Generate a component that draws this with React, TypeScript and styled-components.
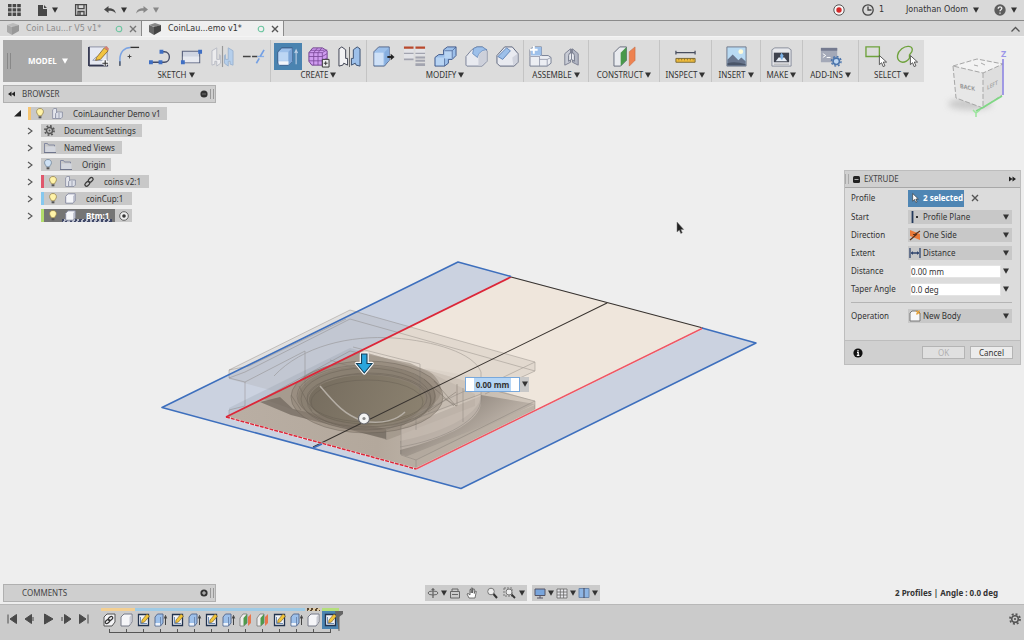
import React from "react";
import styled, { createGlobalStyle } from "styled-components";

const GlobalStyle = createGlobalStyle`
  * { box-sizing: border-box; }
  html, body { margin: 0; padding: 0; }
  body {
    background: #eeeeee;
    color: #333;
    font-family: "Noto Sans", "Open Sans", sans-serif;
    font-size: 8px;
    line-height: 12px;
  }
  button, input, select { font: inherit; color: inherit; margin: 0; padding: 0; border: 0; background: none; border-radius: 0; }
  ul, ol { list-style: none; margin: 0; padding: 0; }
  svg { display: block; flex: none; overflow: visible; }
`;

/* ---------- page frame ---------- */

const Page = styled.div`
  display: flex;
  flex-direction: column;
  min-height: 100vh;
`;

const AppBar = styled.header`
  display: flex;
  align-items: center;
  justify-content: space-between;
  height: 21px;
  padding: 0 7px 0 8px;
  background: #d9d9d9;
  border-bottom: 1px solid #8a8a8a;
`;

const BarSide = styled.div<{ $gap: number }>`
  display: flex;
  align-items: center;
  gap: ${(p) => p.$gap}px;
`;

const BarButton = styled.button`
  display: flex;
  align-items: center;
  gap: 5px;
  height: 16px;
  font-family: "DejaVu Sans", sans-serif;
`;

const TabBar = styled.nav`
  display: flex;
  align-items: stretch;
  height: 16px;
  background: #d6d6d6;
  border-bottom: 1px solid #f4f4f4;
`;

const Tab = styled.div<{ $active?: boolean }>`
  display: flex;
  align-items: center;
  width: 142px;
  padding: 0 4px 0 7px;
  border-right: 1px solid #8a8a8a;
  background: ${(p) => (p.$active ? "#efefef" : "#d9d9d9")};
  color: ${(p) => (p.$active ? "#333" : "#8c8c8c")};
`;

const TabName = styled.button`
  display: flex;
  flex: 1;
  align-items: center;
  gap: 7px;
  white-space: nowrap;
  font-family: "DejaVu Sans", sans-serif;
`;

const TabClose = styled.button`
  display: flex;
  margin-left: 6px;
`;

const CollapseButton = styled.button`
  display: flex;
  align-items: center;
  margin: 0 4px 0 auto;
`;

const Workspace = styled.main`
  position: relative;
  display: flex;
  flex: 1;
  flex-direction: column;
`;

/* ---------- ribbon ---------- */

const RibbonRow = styled.div`
  display: flex;
  align-items: flex-start;
  justify-content: space-between;
  padding: 3px 8px 3px 3px;
  height: 48px;
`;

const Ribbon = styled.div`
  position: relative;
  display: flex;
  height: 42px;
  background: #dcdcdc;
`;

const ModelButton = styled.button`
  display: flex;
  align-items: center;
  width: 79px;
  padding-left: 4px;
  gap: 5px;
  background: #a8a8a8;
  color: #fff;
  font-weight: 700;
`;

const ModelLabel = styled.span`
  margin-left: 12px;
`;

const Group = styled.section<{ $width: number }>`
  display: flex;
  flex-direction: column;
  align-items: center;
  width: ${(p) => p.$width}px;
  padding-top: 3px;
  & + & { border-left: 1px solid #c4c4c4; }
`;

const Tools = styled.div`
  display: flex;
  gap: 3px;
`;

const Tool = styled.button<{ $on?: boolean }>`
  display: flex;
  align-items: center;
  justify-content: center;
  width: 28px;
  height: 27px;
  background: ${(p) => (p.$on ? "#4a83b0" : "transparent")};
`;

const GroupMenu = styled.button`
  display: flex;
  align-items: center;
  gap: 2px;
  height: 10px;
  line-height: 10px;
  white-space: nowrap;
`;

const CubeHolder = styled.div`
  height: 42px;
  width: 72px;
  padding-top: 5px;
`;

/* ---------- browser ---------- */

const Middle = styled.div`
  display: flex;
  flex: 1;
  align-items: flex-start;
  justify-content: space-between;
  padding: 0 3px;
`;

const Browser = styled.aside`
  position: relative;
  width: 213px;
`;

const PanelBar = styled.div`
  display: flex;
  align-items: center;
  width: 213px;
  height: 18px;
  padding: 0 1px 0 4px;
  background: #cfcfcf;
  border: 1px solid #b0b0b0;
`;

const PanelTitle = styled.h2`
  flex: 1;
  margin: 0 0 0 7px;
  font-size: 8px;
  font-weight: 400;
  color: #444;
`;

const IconButton = styled.button`
  display: flex;
  align-items: center;
  justify-content: center;
  min-width: 7px;
  height: 12px;
`;

const Tree = styled.ul`
  display: flex;
  flex-direction: column;
  gap: 4px;
  padding: 4px 0 0 11px;
`;

const TreeItem = styled.li<{ $root?: boolean }>`
  display: flex;
  align-items: center;
  height: 13px;
  margin-left: ${(p) => (p.$root ? 0 : 13)}px;
`;

const Expander = styled.button`
  display: flex;
  width: 14px;
  justify-content: flex-start;
`;

const hatch = "repeating-linear-gradient(115deg, #3f4766 0 2px, #b9bdcb 2px 4px)";

const Chip = styled.span<{ $mark?: string; $on?: boolean; $gap: number; $width: number }>`
  display: flex;
  align-items: center;
  gap: ${(p) => p.$gap}px;
  width: ${(p) => p.$width}px;
  height: 13px;
  padding-left: ${(p) => (p.$mark ? 5 : 3)}px;
  border-left: ${(p) => (p.$mark ? `3px solid ${p.$mark}` : "0")};
  background: ${(p) => (p.$on ? `${hatch} 18px 100% / 50px 3px no-repeat #757575` : "#c8c8c8")};
  color: ${(p) => (p.$on ? "#fff" : "#333")};
  font-weight: ${(p) => (p.$on ? 700 : 400)};
  white-space: nowrap;
`;

const ChipText = styled.span`
  margin-left: 2px;
`;

const ActiveToggle = styled.button`
  display: flex;
  align-items: center;
  justify-content: center;
  width: 17px;
  height: 13px;
  background: #c8c8c8;
`;

/* ---------- extrude dialog ---------- */

const Dialog = styled.form`
  position: relative;
  width: 177px;
  margin-top: 85px;
  background: #dcdcdc;
  border: 1px solid #bdbdbd;
`;

const DialogBar = styled.div`
  display: flex;
  align-items: center;
  height: 17px;
  padding: 0 4px 0 0;
  gap: 4px;
  background: #d0d0d0;
  border-bottom: 1px solid #a8a8a8;
`;

const DialogTitle = styled.h2`
  flex: 1;
  margin: 0;
  font-size: 8px;
  font-weight: 400;
  color: #444;
`;

const Fields = styled.div`
  padding: 0 8px 0 6px;
`;

const Field = styled.div<{ $tall?: boolean }>`
  display: grid;
  grid-template-columns: 57px minmax(0, 1fr);
  align-items: center;
  height: ${(p) => (p.$tall ? 20 : 18)}px;
`;

const Picked = styled.div`
  display: flex;
  align-items: center;
  gap: 7px;
`;

const PickButton = styled.button`
  display: flex;
  align-items: center;
  gap: 4px;
  width: 56px;
  height: 17px;
  padding-left: 4px;
  background: #4f86b4;
  color: #fff;
  font-weight: 700;
  white-space: nowrap;
`;

const Control = styled.div<{ $input?: boolean }>`
  position: relative;
  display: flex;
  align-items: center;
  gap: 2px;
  height: 14px;
  padding-right: 3px;
  padding-left: ${(p) => (p.$input ? 2 : 1)}px;
  background: ${(p) => (p.$input ? "transparent" : "#c8c8c8")};
`;

const Choice = styled.select`
  flex: 1;
  min-width: 0;
  height: 14px;
  appearance: none;
`;

const Value = styled.input`
  flex: 1;
  min-width: 0;
  width: 0;
  height: 13px;
  background: #fff;
  border: 1px solid #e4e4e4;
`;

const Divider = styled.hr`
  margin: 4px 0;
  border: 0;
  border-top: 1px solid #b4b4b4;
`;

const DialogFooter = styled.div`
  display: flex;
  align-items: center;
  justify-content: space-between;
  height: 24px;
  margin-top: 15px;
  padding: 0 7px 0 8px;
  background: #d0d0d0;
  border-top: 1px solid #bdbdbd;
`;

const Buttons = styled.div`
  display: flex;
  gap: 5px;
`;

const DialogButton = styled.button`
  width: 43px;
  height: 13px;
  line-height: 11px;
  background: #ececec;
  border: 1px solid #b4b4b4;
  &:disabled { color: #b0b0b0; background: #e0e0e0; }
`;

/* ---------- model view ---------- */

const Scene = styled.div`
  position: absolute;
  left: calc(50% - 352px);
  top: calc(50% - 101px);
  width: 600px;
  height: 272px;
`;

const DistanceBox = styled.div`
  position: absolute;
  left: 305px;
  top: 157px;
  display: flex;
  align-items: center;
  gap: 2px;
  width: 64px;
  height: 15px;
  padding-right: 1px;
  background: #c8c8c8;
`;

const DistanceInput = styled.input`
  width: 55px;
  height: 15px;
  background: linear-gradient(#b5d5f5, #b5d5f5) 8px 0 / 37px 100% no-repeat #fff;
  border: 1px solid #78a8dc;
  font-weight: 700;
  text-align: center;
`;

/* ---------- bottom rows ---------- */

const BottomRow = styled.div`
  position: relative;
  display: grid;
  grid-template-columns: 1fr auto 1fr;
  align-items: center;
  padding: 0 26px 2px 3px;
`;

const NavGroups = styled.div`
  display: flex;
  gap: 5px;
  margin-left: 23px;
`;

const NavGroup = styled.div`
  display: flex;
  align-items: center;
  height: 16px;
  padding: 0 2px;
  gap: 2px;
  background: #cbcbcb;
`;

const Status = styled.p`
  margin: 0;
  text-align: right;
  font-weight: 700;
`;

const Timeline = styled.footer`
  display: flex;
  align-items: flex-start;
  height: 36px;
  padding: 3px 3px 0 6px;
  background: #cbcbcb;
  border-top: 1px solid #b8b8b8;
`;

const Player = styled.div`
  display: flex;
  gap: 6px;
  margin: 5px 11px 0 0;
`;

const Step = styled.button`
  display: flex;
  width: 12px;
  height: 12px;
  align-items: center;
  justify-content: center;
`;

const Feature = styled.li`
  display: flex;
  flex-direction: column;
  align-items: center;
  width: 17px;
`;

const OwnerBar = styled.span<{ $fill: string; $short?: boolean }>`
  width: ${(p) => (p.$short ? 13 : 17)}px;
  height: 3px;
  background: ${(p) => p.$fill};
`;

const FeatureButton = styled.button<{ $on?: boolean }>`
  display: flex;
  align-items: center;
  justify-content: center;
  width: 17px;
  height: 18px;
  background: ${(p) => (p.$on ? "#4a83b0" : "transparent")};
`;

const Tick = styled.span<{ $end?: "first" | "last" }>`
  width: ${(p) => (p.$end ? 9 : 17)}px;
  align-self: ${(p) => (p.$end === "first" ? "flex-end" : "flex-start")};
  height: 4px;
  border-bottom: 1px solid #555;
  background: linear-gradient(#555, #555) ${(p) => (p.$end === "first" ? "left" : p.$end === "last" ? "right" : "center")} / 1px 100% no-repeat;
`;

const Features = styled.ol`
  display: flex;
  flex: 1;
`;

const TimelineSettings = styled(IconButton)`
  margin-top: 5px;
`;

/* ---------- small glyphs ---------- */

const Caret = ({ size = 6, color = "#333" }: { size?: number; color?: string }) => (
  <svg width={size} height={size} viewBox="0 0 6 6" aria-hidden="true"><path d="M0 .5h6L3 5.8z" fill={color} /></svg>
);

const Cross = ({ color = "#555" }: { color?: string }) => (
  <svg width="8" height="8" viewBox="0 0 8 8"><path d="M1 1l6 6M7 1L1 7" stroke={color} strokeWidth="1.4" /></svg>
);

const Grip = ({ h = 10, color = "#999" }: { h?: number; color?: string }) => (
  <svg width="4" height={h} viewBox={`0 0 4 ${h}`}><path d={`M.5 0v${h}M3.5 0v${h}`} stroke={color} /></svg>
);

const TabCube = ({ dark }: { dark?: boolean }) => (
  <svg width="12" height="12" viewBox="0 0 12 12">
    <path d="M0 2l6-2 6 2-6 2z" fill={dark ? "#888" : "#bbb"} />
    <path d="M0 2l5 2v8L0 9z" fill={dark ? "#666" : "#a8a8a8"} />
    <path d="M5 4l7-2v6l-7 4z" fill={dark ? "#444" : "#989898"} />
  </svg>
);

const Saved = () => (
  <svg width="8" height="8" viewBox="0 0 8 8"><circle cx="4" cy="4" r="2.8" fill="none" stroke="#6cc5a0" strokeWidth="1.1" /></svg>
);

const Bulb = ({ blue }: { blue?: boolean }) => (
  <svg width="8" height="11" viewBox="0 0 8 11">
    <path d="M4 .5C1.800.5.6 2 .6 3.700c0 2 1.500 2.500 1.800 4.100h3.200C5.900 6.200 7.400 5.700 7.400 3.700 7.400 2 6.200.5 4 .5z" fill={blue ? "#cfe2f5" : "#fff3a8"} stroke={blue ? "#6f8499" : "#97844a"} strokeWidth=".8" />
    <path d="M2.600 8.300h2.800v2H2.600z" fill="#555" />
  </svg>
);

const Gear = ({ size = 11 }: { size?: number }) => (
  <svg width={size} height={size} viewBox="0 0 12 12">
    <circle cx="6" cy="6" r="3.300" fill="none" stroke="#555" strokeWidth="1.600" />
    <circle cx="6" cy="6" r="5" fill="none" stroke="#555" strokeWidth="1.800" strokeDasharray="1.960 1.960" />
    <circle cx="6" cy="6" r="1.100" fill="#555" />
  </svg>
);

const Folder = () => (
  <svg width="12" height="10" viewBox="0 0 12 10">
    <path d="M.5 9.500v-9h3l1 1.500h6v1.500" fill="none" stroke="#8288a0" />
    <path d="M1.500 9V3.500h10V9z" fill="#d3d6de" /><path d="M0 9.500h12" stroke="#70768c" />
  </svg>
);

const Component = () => (
  <svg width="11" height="11" viewBox="0 0 11 11">
    <path d="M.6 1.800L2 .5h2.500V5L3.500 10.500H.6z" fill="#e4e6ec" stroke="#858a9e" strokeWidth=".8" />
    <path d="M3.600 5.500L5 4h5.400v5L9 10.500H3.600z" fill="#dcdfe8" stroke="#858a9e" strokeWidth=".8" />
    <path d="M7 5v5" stroke="#858a9e" strokeWidth=".7" />
  </svg>
);

const Body = ({ size = 11 }: { size?: number }) => (
  <svg width={size} height={size} viewBox="0 0 11 11">
    <path d="M.7 3.300L3 .8h7.200v7L8 10.200H.7z" fill="#f4f5f9" stroke="#80859c" strokeWidth=".9" strokeLinejoin="round" />
    <path d="M8.200 3.300v6.500l1.900-2V1z" fill="#b9bccb" />
  </svg>
);

const Link = () => (
  <svg width="10" height="10" viewBox="0 0 10 10" fill="none" stroke="#3c3c3c" strokeWidth="1.300">
    <rect x="4" y="1.200" width="5.400" height="3.400" rx="1.700" transform="rotate(-45 6.700 2.900)" />
    <rect x=".6" y="5.200" width="5.400" height="3.400" rx="1.700" transform="rotate(-45 3.300 6.900)" />
  </svg>
);

const Arrow = ({ size = 11 }: { size?: number }) => (
  <svg width={size * 0.7} height={size} viewBox="0 0 8 12"><path d="M.6.600v9.200l2.200-2 1.500 3.500 1.600-.7L4.400 7.200h3z" fill="#fff" stroke="#333" strokeWidth=".8" /></svg>
);

const Chevron = () => (
  <svg width="6" height="8" viewBox="0 0 6 8"><path d="M1 1l4 3-4 3" fill="none" stroke="#555" strokeWidth="1.100" /></svg>
);

const Dot = ({ plus }: { plus?: boolean }) => (
  <svg width="8" height="8" viewBox="0 0 8 8"><circle cx="4" cy="4" r="3.600" fill="#333" /><path d={plus ? "M2 4h4M4 2v4" : "M2 4h4"} stroke={plus ? "#ddd" : "#777"} strokeWidth=".9" /></svg>
);

const Rewind = ({ flip }: { flip?: boolean }) => (
  <svg width="7" height="6" viewBox="0 0 7 6"><path d={flip ? "M0 .500l3.500 2.500L0 5.500zM3.500.500L7 3 3.500 5.500z" : "M7 .500L3.500 3 7 5.500zM3.500.500L0 3l3.500 2.500z"} fill="#222" /></svg>
);

/* ---------- ribbon icons, on a 24 x 24 grid ---------- */

const Glyph = ({ children, size = 23 }: { children: React.ReactNode; size?: number }) => (
  <svg width={size} height={size} viewBox="0 0 24 24" fill="none" aria-hidden="true">{children}</svg>
);

const blueSolid = "#9dc0ea";

const sketchTools: [string, React.ReactNode][] = [
  ["Create sketch", <Glyph key="a">
    <path d="M2 2h19v19H2z" fill="#e6e9f2" stroke="#8b90a4" strokeWidth="1" /><path d="M2 21.500h20M2 2v20" stroke="#33374f" strokeWidth="1.800" />
    <path d="M6 16h10M6 16l4-4" stroke="#9aa2b8" /><path d="M10 13L18 3l4 3-8 9-5 1z" fill="#f2c440" stroke="#7e5e25" strokeWidth=".8" /><path d="M18 3l4 3 1-2-3-3z" fill="#d9806f" />
    <path d="M19 15v7M15.500 18.500h7" stroke="#fff" strokeWidth="3" /><path d="M19 16v6M16 19h6" stroke="#333" strokeWidth="1.200" /></Glyph>],
  ["Fillet", <Glyph key="b"><path d="M2 21v-6C2 7 7 2.500 13 2.500" stroke="#7ba3e2" strokeWidth="1.600" /><path d="M13 2.500h9" stroke="#333" strokeWidth="1.400" /><path d="M2 17v5" stroke="#444" strokeWidth="1.200" /><path d="M10 12h4M12 10v4" stroke="#444" /></Glyph>],
  ["Line", <Glyph key="c"><path d="M2 18h10M12 18h4c7 0 7-11 0-11h-2" stroke="#444c68" strokeWidth="1.400" /><path d="M0 16h4v4H0zM10 16h4v4h-4zM11 5h4v4h-4z" fill="#3f6fc4" /></Glyph>],
  ["Rectangle", <Glyph key="d"><path d="M2.500 6.500h18v12h-18z" fill="#d0d5e2" stroke="#5c6480" strokeWidth="1.200" /><path d="M3 12h17v6H3z" fill="#e7e9f0" /><path d="M1 16h4v4H1zM19 5h4v4h-4z" fill="#3f6fc4" /></Glyph>],
  ["Mirror sketch", <Glyph key="e"><path d="M1 6l5-3v12h3v-5l1 1v8l-4 3v-5H4v3l-3 1z" fill="#ececee" stroke="#b8bbc4" /><path d="M23 6l-5-3v12h-3v-5l-1 1v8l4 3v-5h2v3l3 1z" fill="#b5cfec" stroke="#9db4d0" /><path d="M12 1v22" stroke="#999" strokeWidth="1.200" /></Glyph>],
  ["Trim", <Glyph key="f"><path d="M1 12h15" stroke="#444" strokeWidth="1.500" strokeDasharray="8 1.500" /><path d="M16 12h7" stroke="#8ab0e8" strokeWidth="1.400" /><path d="M15 19l3-5M19 12l4-7" stroke="#74a0e4" strokeWidth="1.700" /></Glyph>],
];

const createTools: [string, React.ReactNode][] = [
  ["Extrude", <Glyph key="a">
    <path d="M2 7l4-4h11v14l-4 4H4l-2-2z" fill={blueSolid} stroke="#38557f" strokeWidth="1" strokeLinejoin="round" />
    <path d="M2.500 7.500h10.500v9H2.500z" fill="#bcd6f4" /><path d="M13 7l4-4v14l-4 4z" fill="#7ba4d6" /><path d="M2.500 17H13v3.500H3z" fill="#f3f5fa" />
    <path d="M21 20V6M19.500 8.500L21 5l1.500 3.500" stroke="#bdd0e6" strokeWidth="1.100" /></Glyph>],
  ["Create form", <Glyph key="b"><path d="M2 8l4-5h10l5 3v10l-4 5H5l-3-4z" fill="#cf9cf0" stroke="#71418e" strokeLinejoin="round" />
    <path d="M2 8h14l5-3M2 12h14l5-3M2 16.500h14l5-3M7 21V8l4-5M11.500 21V8l4-5M16 21V8M4 5.500h14" stroke="#7d4a9c" strokeWidth=".9" />
    <path d="M16 15h7v8h-7z" fill="#eee" stroke="#333" /><path d="M19.500 17v4M17.500 19h4" stroke="#333" /></Glyph>],
  ["Mirror", <Glyph key="c"><path d="M1 4l3-2 4 3v9h2v7l-4-2-1 2-4 1z" fill="#f2f2f4" stroke="#3b3f4e" /><path d="M23 4l-3-2-4 3v9h-2v7l4-2 1 2 4 1z" fill={blueSolid} stroke="#3b4f70" /><path d="M12 2v21" stroke="#666" /></Glyph>],
];

const modifyTools: [string, React.ReactNode][] = [
  ["Press pull", <Glyph key="a"><path d="M2 7l5-5h11v14l-5 6H2z" fill={blueSolid} stroke="#56668a" strokeLinejoin="round" /><path d="M2.500 8H12v13H2.500z" fill="#cfe1f7" /><path d="M13 7.500l5-5V16l-5 5z" fill="#86aedf" /><path d="M16 12.500h4" stroke="#222" strokeWidth="2" /><path d="M19.500 9l4 3.500-4 3.500z" fill="#222" /></Glyph>],
  ["Physical material", <Glyph key="b"><path d="M1 2h10v14H1zM13 2h10v9H13z" fill="#e2e3e7" /><path d="M1 1.500h10V4H1zM13 1.500h10V4H13z" fill="#b9492c" /><path d="M1 8h10v1.500H1zM1 14h10v2H1zM13 8h10v1.500H13zM13 12h10v2H13zM13 15.500h10v2H13zM13 19h10v3H13z" fill="#a2a4af" /></Glyph>],
  ["Combine", <Glyph key="c"><path d="M1 13l4-3h5V5l4-3h9v9l-4 4h-4v4l-4 3H1z" fill={blueSolid} stroke="#40598a" /><path d="M2 13h9v8H2zM11 6h8v8h-8z" fill="#bfd8f5" opacity=".8" /><path d="M11 22v-8M11 6h8v8M19 6l4-4" stroke="#40598a" strokeWidth=".7" /></Glyph>],
  ["Fillet edge", <Glyph key="d"><path d="M1 21V12l6-7 5-3h6l5 4v11l-5 5H2z" fill="#e8eaf0" stroke="#777f96" strokeLinejoin="round" /><path d="M9 3.500L13 2h5l5 3c-6 0-9 4-10 8L8 9z" fill={blueSolid} stroke="#5f83b4" strokeWidth=".8" /><path d="M14 21.500v-8c0-4 3-7.500 8.500-7.500v11l-5 4.500z" fill="#cdd0da" /></Glyph>],
  ["Chamfer", <Glyph key="e"><path d="M1 11l8-9h8l6 7v9l-4 4H4l-3-3z" fill="#e8eaf0" stroke="#5d657c" strokeLinejoin="round" /><path d="M2 12l9-9 4 3-8 9z" fill={blueSolid} stroke="#4c74ad" strokeWidth=".8" /><path d="M17 13l5.500-4v9L18 21.500z" fill="#d0d3dd" /></Glyph>],
];

const assembleTools: [string, React.ReactNode][] = [
  ["New component", <Glyph key="a"><path d="M1 12V5l3-3h9v9h7l3 2v6l-4 3H1z" fill="#eceef3" stroke="#777f94" /><path d="M2 5l3-3h8v9H2z" fill={blueSolid} /><path d="M1.500 12h9.500v10M11 12l2-2M11 15h8v7M19 15l4-2" stroke="#8a90a4" strokeWidth=".8" /><path d="M5 1v8M1 5h8" stroke="#fff" strokeWidth="2" /></Glyph>],
  ["Joint", <Glyph key="b"><path d="M5 21V9l6-5v14z" fill="#c9ccd6" stroke="#7c8192" /><path d="M19 21V9l-6-5v14z" fill="#b2b6c3" stroke="#7c8192" /><path d="M9 17v-6a3 3 0 016 0v6l-3-2z" fill="#e9ebf0" stroke="#6f7486" /><path d="M12 4v11" stroke="#7c8192" /></Glyph>],
];

const constructTools: [string, React.ReactNode][] = [
  ["Offset plane", <Glyph key="a"><path d="M1 8l6-6h7v14l-6 6H1z" fill="#e9ebef" stroke="#666d7c" /><path d="M8 8l6-6v14l-6 6z" fill="#48984a" /><path d="M17 7l6-5v14l-6 6z" fill="#ee8250" stroke="#c46b42" strokeWidth=".6" /></Glyph>],
];

const inspectTools: [string, React.ReactNode][] = [
  ["Measure", <Glyph key="a"><path d="M2 8h20M2 6v4M22 6v4" stroke="#474d5e" strokeWidth="1.300" /><path d="M2 14h20v4H2z" fill="#f1bd3c" stroke="#7b6833" /><path d="M5 14v2M8 14v2M11 14v2M14 14v2M17 14v2M20 14v2" stroke="#7b6833" strokeWidth=".8" /></Glyph>],
];

const insertTools: [string, React.ReactNode][] = [
  ["Insert image", <Glyph key="a"><path d="M2 2h20v20H2z" fill="#b9daf2" stroke="#70798a" /><circle cx="16.500" cy="7" r="2.500" fill="#fffbd9" /><path d="M2.500 21.500v-6L8 10l6 6 3-3 4.500 4v4.500z" fill="#68758c" /><path d="M2.500 19c6-2 12-1 19 1v1.500h-19z" fill="#4a5568" /></Glyph>],
];

const makeTools: [string, React.ReactNode][] = [
  ["3D print", <Glyph key="a"><path d="M2 5l3-2h14l3 2v17H2z" fill="#e7e8ec" stroke="#888d9b" /><path d="M4 8h16v10H4z" fill="#3f434f" /><path d="M6 17l3-4h6l3 4z" fill="#e8eef6" /><path d="M12 8l-1.500 3 1 4h1.500l1-4z" fill="#7cb2e8" /><path d="M4 20h16" stroke="#aaa" /></Glyph>],
];

const addinTools: [string, React.ReactNode][] = [
  ["Scripts", <Glyph key="a"><path d="M2 3h17v15H2z" fill="#a4a9b8" /><path d="M2 3h17v3H2z" fill="#757b90" /><path d="M4 9l3 2-3 2M8 13h4" stroke="#fff" /><circle cx="18" cy="17" r="3.300" fill="#c0d8f2" stroke="#4c75ac" strokeWidth="1.600" /><circle cx="18" cy="17" r="5" stroke="#4c75ac" strokeWidth="1.500" strokeDasharray="2 1.900" /></Glyph>],
];

const PointerShape = () => <path d="M15 11v9.500l2.300-2 1.600 4 1.900-.8-1.700-3.900h3.400z" fill="#fff" stroke="#444" strokeWidth=".9" />;

const selectTools: [string, React.ReactNode][] = [
  ["Window selection", <Glyph key="a"><path d="M1 2h14v10H1z" stroke="#6ea23c" strokeWidth="1.400" /><PointerShape /></Glyph>],
  ["Freeform selection", <Glyph key="b"><path d="M4 17C0 14 1 8 6 4s11-3 11 1-4 4-3 7-6 8-10 5z" stroke="#6ea23c" strokeWidth="1.400" /><PointerShape /></Glyph>],
];

const groups: { name: string; width: number; tools: [string, React.ReactNode][] }[] = [
  { name: "SKETCH", width: 188, tools: sketchTools },
  { name: "CREATE", width: 96, tools: createTools },
  { name: "MODIFY", width: 157, tools: modifyTools },
  { name: "ASSEMBLE", width: 65, tools: assembleTools },
  { name: "CONSTRUCT", width: 71, tools: constructTools },
  { name: "INSPECT", width: 52, tools: inspectTools },
  { name: "INSERT", width: 49, tools: insertTools },
  { name: "MAKE", width: 42, tools: makeTools },
  { name: "ADD-INS", width: 56, tools: addinTools },
  { name: "SELECT", width: 66, tools: selectTools },
];

const ViewCube = () => (
  <svg width="72" height="76" viewBox="944 46 72 76" role="img" aria-label="View cube">
    <defs><filter id="soft" x="-30%" y="-50%" width="160%" height="200%"><feGaussianBlur stdDeviation="3" /></filter></defs>
    <ellipse cx="970" cy="105" rx="22" ry="6" fill="#bbb" opacity=".7" filter="url(#soft)" />
    <path d="M953 67l24-7 26 5-20 9z" fill="#f3f3f3" /><path d="M953 67l30 7v35l-27-10z" fill="#e7e7e7" /><path d="M983 74l20-9-1 31-19 13z" fill="#dedede" />
    <path d="M953 67l24-7 26 5-20 9zM953 67l3 32 27 10V74M983 109l19-13" fill="none" stroke="#a6a6a6" strokeWidth="1" strokeDasharray="5 2" />
    <path d="M974 66l4 1M981 64l4 2" stroke="#aaa" />
    <text x="0" y="0" transform="matrix(.95 .2 .05 1 960 89)" fontSize="6" fontWeight="700" fill="#999">BACK</text>
    <text x="0" y="0" transform="matrix(.8 -.42 0 1 987 91)" fontSize="6" fontWeight="700" fill="#aaa">LEFT</text>
    <path d="M1003 60v36" stroke="#8d85e2" strokeWidth="1.600" /><path d="M1002 97l-20 12-6 3" stroke="#7fd884" strokeWidth="1.800" fill="none" />
    <path d="M973 111l3 3 4-3M976 114v4" stroke="#9ae59c" fill="none" strokeWidth="1.500" />
    <text x="1001" y="58" fontSize="9" fontWeight="700" fill="#9b96e8">Z</text>
  </svg>
);

/* ---------- model drawing ---------- */

const Model = () => (
  <svg width="600" height="272" viewBox="160 220 600 272" fill="none" role="img" aria-label="Sketch plane with coin launcher body">
    <defs>
      <linearGradient id="floor" x1="240" y1="400" x2="520" y2="420" gradientUnits="userSpaceOnUse">
        <stop offset="0" stopColor="#b9aea3" /><stop offset=".5" stopColor="#b3a89c" /><stop offset="1" stopColor="#cfc5ba" />
      </linearGradient>
      <linearGradient id="bowl" x1="310" y1="375" x2="425" y2="420" gradientUnits="userSpaceOnUse">
        <stop offset="0" stopColor="#756c5e" /><stop offset="1" stopColor="#8c8270" />
      </linearGradient>
      <linearGradient id="cove" x1="450" y1="405" x2="475" y2="440" gradientUnits="userSpaceOnUse">
        <stop offset="0" stopColor="#8f867d" /><stop offset="1" stopColor="#b8aea4" />
      </linearGradient>
      <clipPath id="cream"><path d="M226 417L511 277l192 51-287 141z" /></clipPath>
    </defs>
    <path d="M162 407.500L458 262l298 81-295 145.500z" fill="#cbd2e0" />
    <path d="M226 417L511 277l192 51-287 141z" fill="#efe6dc" />
    <path d="M229 370l121-60 185 52v9l-119 58-187-50z" fill="#857a70" opacity=".12" />
    <path d="M229 408l121-60 185 53v8l-119 60-187-52z" fill="#8990a0" opacity=".22" />
    <g clipPath="url(#cream)">
      <path d="M229 416l121-68 185 53v8l-119 60-190-52z" fill="url(#floor)" />
      <path d="M258 397l92-46 60 12 65 31v12l-88 34-60-18z" fill="#9d9286" opacity=".65" />
      <path d="M260 402l20-5 13 12 93 20v10l-95-24z" fill="#71685f" opacity=".75" />
      <path d="M481 395l54 9-119 56-16-6v-13c36-7 80-24 81-46z" fill="url(#cove)" />
      <path d="M535 405v5l-119 59-16-10 30-12z" fill="#b6aca1" opacity=".8" />
      <path d="M401 426l80-32v8c0 18-30 35-81 48z" fill="#c4bab0" opacity=".75" />
      <path d="M425 368l56 10v18l-80 32 20-18c24-8 28-26 4-42z" fill="#d9cfc4" opacity=".6" />
    </g>
    <ellipse cx="367" cy="397" rx="76" ry="36" fill="#8d8274" opacity=".5" />
    <ellipse cx="367" cy="397" rx="69" ry="31" fill="#7c7264" opacity=".5" />
    <ellipse cx="367" cy="400" rx="58" ry="25" fill="url(#bowl)" />
    <g stroke="#5f574d" strokeWidth=".6" opacity=".6">
      <ellipse cx="367" cy="397" rx="76" ry="36" /><ellipse cx="366" cy="396" rx="69" ry="31" />
      <ellipse cx="366" cy="399" rx="65" ry="31" /><ellipse cx="369" cy="401" rx="62" ry="28" />
      <ellipse cx="367" cy="398" rx="60" ry="24" /><ellipse cx="367" cy="402" rx="56" ry="22" />
      <path d="M291 395l10 15M299 386l13 25M424 379l30 27M434 381l22 25M428 412l28-20M443 398l14 8v-22" />
    </g>
    <g stroke="#77716b" strokeWidth=".7" opacity=".5">
      <path d="M229 370l121-60 185 52v9l-50 23M229 370v8l16 4v24l-16 4v8M229 378l16-6 105-53 185 52M245 382l60-31v35M535 362l-50 24M229 370l20-4 97-47" />
      <path d="M274 376c28-30 76-41 120-38 40 3 80 15 87 34v27c0 20-34 40-81 48" />
      <path d="M260 400l90-49 14 3M330 360l25 8M386 440v-10M386 430l70-35 29-13M353 347l67 17v30M401 424v31l15 5 119-59-62-16M416 460v9M401 424l80-30M416 418v12M463 388v34M535 401v8" />
    </g>
    <path d="M320 386c16 19 25 29 43 35 20 4 35-2 42-9" stroke="#b5aea5" strokeWidth="1.500" />
    <path d="M511 277l192 51M607 303L313 447" stroke="#38332f" strokeWidth="1.100" />
    <path d="M226 417l190 52 287-141" stroke="#fff" strokeWidth="2" opacity=".6" />
    <path d="M511 277L226 417" stroke="#dc2638" strokeWidth="1.600" />
    <path d="M226 417l190 52" stroke="#dc2638" strokeWidth="1.500" strokeDasharray="4 1" />
    <path d="M416 469l287-141" stroke="#ee5764" strokeWidth="1.500" />
    <path d="M511 276.500L458 262 162 407.500l299 81L756 343l-54-15M313 448l9-4" stroke="#3d6fbd" strokeWidth="1.600" strokeLinejoin="round" />
    <path d="M361.500 354h5.500v9.500h5l-7.700 9.500-7.800-9.500h5z" fill="#2aa5dc" stroke="#fff" strokeWidth="3.500" strokeLinejoin="round" />
    <path d="M361.500 354h5.500v9.500h5l-7.700 9.500-7.800-9.500h5z" fill="#2aa5dc" stroke="#173f58" strokeWidth="1.100" />
    <circle cx="364" cy="418.500" r="5.500" fill="#f4f4f4" stroke="#68686c" strokeWidth="1.200" /><circle cx="364" cy="418.500" r="1.600" fill="#888" />
    <path d="M677 222v10l2.300-2 1.500 3.500 1.500-.7-1.500-3.300h2.900z" fill="#222" stroke="#777" strokeWidth=".5" />
  </svg>
);

/* ---------- timeline icons ---------- */

const featureIcons: Record<string, React.ReactNode> = {
  link: <svg width="13" height="14" viewBox="0 0 13 14"><path d="M1 4l3-3h8v8l-3 4H1z" fill="#f3f3f5" stroke="#555" /><g fill="none" stroke="#333" strokeWidth="1.200"><rect x="5" y="4" width="5" height="3" rx="1.500" transform="rotate(-40 7.500 5.500)" /><rect x="2" y="7" width="5" height="3" rx="1.500" transform="rotate(-40 4.500 8.500)" /></g></svg>,
  body: <svg width="13" height="14" viewBox="0 0 13 14"><path d="M1 4l3-3h8v8l-3 4H1z" fill="#f5f5f8" stroke="#777a88" strokeLinejoin="round" /><path d="M9.500 4v8l2-3V1.500z" fill="#c9cbd4" /></svg>,
  sketch: <svg width="13" height="14" viewBox="0 0 13 14"><path d="M1.500 1.500h10v11h-10z" fill="#f2f4f8" stroke="#22334e" strokeWidth="1.300" /><path d="M3.500 4v6.500H10" fill="none" stroke="#6f8fb8" /><path d="M5 7l5-6 2.500 2L7.500 9l-3 1z" fill="#f2c53a" stroke="#6d5526" strokeWidth=".6" /></svg>,
  extrude: <svg width="13" height="14" viewBox="0 0 13 14"><path d="M1 4l2.500-3H9v9l-2.500 3H1z" fill="#9dc0ea" stroke="#50648a" strokeWidth=".9" /><path d="M1.500 10h5v2.500h-5z" fill="#eef3fa" /><path d="M6.500 4v9" stroke="#50648a" strokeWidth=".6" /><path d="M11.500 12V4M10.300 5.500l1.200-3 1.200 3" fill="none" stroke="#333" strokeWidth=".9" /></svg>,
  plane: <svg width="13" height="14" viewBox="0 0 13 14"><path d="M1 5l3-4h4v9l-3 3H1z" fill="#eee" stroke="#777" strokeWidth=".8" /><path d="M4.500 5L8 1v9l-3.500 3z" fill="#4e9a4c" /><path d="M9 4l3-3v9l-3 3z" fill="#e8774c" /></svg>,
};

const features: { kind: string; label: string; bar: string; short?: boolean; on?: boolean }[] = [
  { kind: "link", label: "coins", bar: "#f3cf92" },
  { kind: "body", label: "coinCup", bar: "#f3cf92" },
  ...["sketch", "extrude", "sketch", "extrude", "sketch", "extrude", "plane", "plane", "sketch", "extrude"].map((kind) => ({ kind, label: kind, bar: "#9fcbe6" })),
  { kind: "body", label: "Btm", bar: "repeating-linear-gradient(115deg, #5a4630 0 2px, #dcc9a4 2px 4px)", short: true },
  { kind: "sketch", label: "Sketch", bar: "#b5e07c", on: true },
];

const playerPaths: [string, string][] = [
  ["To start", "M2 1.500v9M10.500 1.500v9L4 6z"],
  ["Step back", "M7.500 1.500v9L1 6zM9 4v4"],
  ["Play", "M2.500 1v10L11 6z"],
  ["Step forward", "M4.500 1.500v9L11 6zM2 4v4"],
  ["To end", "M10 1.500v9M1.500 1.500v9L8 6z"],
];

type Node = { text: string; width: number; gap: number; mark?: string; icons: React.ReactNode };

const nodes: Node[] = [
  { text: "Document Settings", width: 101, gap: 7, icons: <Gear /> },
  { text: "Named Views", width: 81, gap: 6, icons: <Folder /> },
  { text: "Origin", width: 70, gap: 8, icons: <><Bulb blue /><Folder /></> },
  { text: "coins v2:1", width: 108, gap: 8, mark: "#e0576b", icons: <><Bulb /><Component /><Link /></> },
  { text: "coinCup:1", width: 91, gap: 8, mark: "#85c8ee", icons: <><Bulb /><Body /></> },
];

const choices = [
  { id: "start", label: "Start", value: "Profile Plane", icon: <svg width="12" height="12" viewBox="0 0 12 12"><path d="M3.500 0v12" stroke="#23395c" strokeWidth="1.800" /><path d="M7 6h2" stroke="#333" strokeWidth="1.800" /></svg> },
  { id: "direction", label: "Direction", value: "One Side", icon: <svg width="12" height="12" viewBox="0 0 12 12"><path d="M1 1l10 4v6L1 7z" fill="#e87a3a" /><path d="M1 11l7-6M8 5l-4 .5M5 6l6-4" stroke="#5a321c" strokeWidth="1.200" /></svg> },
  { id: "extent", label: "Extent", value: "Distance", icon: <svg width="12" height="12" viewBox="0 0 12 12"><path d="M1 1v10M11 1v10M2 6h8" stroke="#31466e" strokeWidth="1.300" fill="none" /><path d="M2 6l2-2v4zM10 6L8 4v4z" fill="#31466e" /></svg> },
];

const ChoiceField = ({ id, label, value, icon }: { id: string; label: string; value: string; icon: React.ReactNode }) => (
  <Field>
    <label htmlFor={id}>{label}</label>
    <Control>{icon}<Choice id={id}><option>{value}</option></Choice><Caret size={6} /></Control>
  </Field>
);

const ValueField = ({ id, label, value }: { id: string; label: string; value: string }) => (
  <Field>
    <label htmlFor={id}>{label}</label>
    <Control $input><Value id={id} defaultValue={value} /><Caret size={6} /></Control>
  </Field>
);

const navA = [
  <svg key="o" width="12" height="12" viewBox="0 0 12 12" fill="none" stroke="#666"><path d="M6 1v10" strokeWidth="1.300" /><ellipse cx="6" cy="6" rx="5" ry="2" /><path d="M4.500 2.500h3" /></svg>,
  <Caret key="c" />,
  <svg key="l" width="12" height="12" viewBox="0 0 12 12" fill="none" stroke="#666"><path d="M1.500 4.500h9v6.500h-9zM3 7.500h6M3 4V2h6v2" /></svg>,
  <svg key="h" width="18" height="12" viewBox="-3 0 18 12"><path d="M3 11L1 7l1-.6L4 8V2.500h1.200V6 1h1.300v5l.6-4h1.200v4.500l1-2.500 1 .4L9 11z" fill="#fff" stroke="#555" strokeWidth=".8" /></svg>,
  <svg key="z" width="18" height="12" viewBox="-3 0 18 12"><circle cx="5" cy="4.500" r="3.300" fill="#eee" stroke="#777" /><path d="M7.500 7l3.500 4" stroke="#333" strokeWidth="2" /></svg>,
  <svg key="w" width="14" height="12" viewBox="0 0 14 12"><path d="M1 1h8v8H1z" fill="none" stroke="#777" strokeDasharray="2 1" /><circle cx="6" cy="5" r="3" fill="#eee" stroke="#777" /><path d="M8.500 7.500L12 11" stroke="#333" strokeWidth="1.800" /></svg>,
  <Caret key="d" />,
];

const navB = [
  <svg key="m" width="12" height="12" viewBox="0 0 12 12"><path d="M1 2h10v6.500H1z" fill="#79a5dc" stroke="#556" /><path d="M3 11h6M6 9v2" stroke="#556" /></svg>,
  <Caret key="a" />,
  <svg key="g" width="12" height="12" viewBox="0 0 12 12"><path d="M1 2h10v9H1zM1 5h10M1 8h10M4.300 2v9M7.600 2v9" fill="#e8e8ec" stroke="#666" strokeWidth=".8" /></svg>,
  <Caret key="b" />,
  <svg key="v" width="12" height="12" viewBox="0 0 12 12"><path d="M1 1.500h10v9H1z" fill="#8db5e4" stroke="#6b86ab" /><path d="M6 1v10" stroke="#445" /></svg>,
  <Caret key="c" />,
];

export default function App() {
  return (
    <Page>
      <GlobalStyle />
      <AppBar>
        <BarSide $gap={17}>
          <BarButton aria-label="Data panel"><svg width="13" height="12" viewBox="0 0 13 12"><path d="M0 0h3.600v3.300H0zM4.600 0h3.600v3.300H4.600zM9.200 0h3.600v3.300H9.200zM0 4.300h3.600v3.300H0zM4.600 4.300h3.600v3.300H4.600zM9.200 4.300h3.600v3.300H9.200zM0 8.600h3.600v3.300H0zM4.600 8.600h3.600v3.300H4.600zM9.200 8.600h3.600v3.300H9.200z" fill="#484848" /></svg></BarButton>
          <BarButton aria-label="File"><svg width="9" height="11" viewBox="0 0 9 11"><path d="M0 0h5v4h4v7H0zM6 0l3 3H6z" fill="#484848" /></svg><Caret /></BarButton>
          <BarButton aria-label="Save"><svg width="12" height="12" viewBox="0 0 12 12"><path d="M.6.600h10.800v10.800H.6zM3 .6v4h6v-4M3 11.400V7.500h6v3.900" fill="none" stroke="#484848" strokeWidth="1.300" /><path d="M5 8v3" stroke="#484848" strokeWidth="1.400" /></svg></BarButton>
          <BarSide $gap={9}>
            <BarButton aria-label="Undo"><svg width="12" height="8" viewBox="0 0 12 8"><path d="M0 3.500L4.500 0v2.200c4.500 0 7 1.800 7.200 5.300C10 5.300 8 4.800 4.500 4.800V7z" fill="#484848" /></svg><Caret /></BarButton>
            <BarButton aria-label="Redo"><svg width="12" height="8" viewBox="0 0 12 8"><path d="M12 3.500L7.500 0v2.200C3 2.200.5 4 .3 7.500 2 5.300 4 4.800 7.500 4.800V7z" fill="#888" /></svg><Caret color="#888" /></BarButton>
          </BarSide>
        </BarSide>
        <BarSide $gap={22}>
          <BarSide $gap={17}>
            <BarButton aria-label="Record"><svg width="12" height="12" viewBox="0 0 12 12"><circle cx="6" cy="6" r="5.200" fill="#f6f6f6" stroke="#555" /><circle cx="6" cy="6" r="2.700" fill="#d42a2a" /></svg></BarButton>
            <BarButton aria-label="Jobs 1"><svg width="12" height="12" viewBox="0 0 12 12" fill="none" stroke="#444" strokeWidth="1.300"><circle cx="6" cy="6" r="5.200" /><path d="M6 2.500V6h3.500" /></svg><span>1</span></BarButton>
          </BarSide>
          <BarSide $gap={15}>
            <BarButton>Jonathan Odom<Caret /></BarButton>
            <BarButton aria-label="Help"><svg width="12" height="12" viewBox="0 0 12 12"><circle cx="6" cy="6" r="5.700" fill="#5c5c5c" /><path d="M4.200 4.700c0-2.600 3.800-2.300 3.600-.2C7.700 5.700 6 5.700 6 7.200M6 8.400v1.300" fill="none" stroke="#eee" strokeWidth="1.300" /></svg><Caret /></BarButton>
          </BarSide>
        </BarSide>
      </AppBar>
      <TabBar>
        <Tab><TabName><TabCube />Coin Lau...r V5 v1*</TabName><Saved /><TabClose aria-label="Close Coin Launcher V5"><Cross color="#777" /></TabClose></Tab>
        <Tab $active><TabName><TabCube dark />CoinLau...emo v1*</TabName><Saved /><TabClose aria-label="Close CoinLauncher Demo"><Cross /></TabClose></Tab>
        <CollapseButton aria-label="Collapse"><svg width="9" height="6" viewBox="0 0 9 6"><path d="M.5 5.500l4-4 4 4" fill="none" stroke="#555" strokeWidth="1.300" /></svg></CollapseButton>
      </TabBar>

      <Workspace>
        <Scene>
          <Model />
          <DistanceBox><DistanceInput aria-label="Extrude distance" defaultValue="0.00 mm" /><Caret /></DistanceBox>
        </Scene>

        <RibbonRow>
          <Ribbon>
            <ModelButton><Grip h={16} color="#888" /><ModelLabel>MODEL</ModelLabel><Caret color="#fff" /></ModelButton>
            {groups.map((g) => (
              <Group key={g.name} $width={g.width}>
                <Tools>{g.tools.map(([label, icon]) => <Tool key={label} aria-label={label} $on={label === "Extrude"}>{icon}</Tool>)}</Tools>
                <GroupMenu>{g.name}<Caret /></GroupMenu>
              </Group>
            ))}
          </Ribbon>
          <CubeHolder><ViewCube /></CubeHolder>
        </RibbonRow>

        <Middle>
          <Browser>
            <PanelBar>
              <IconButton aria-label="Hide browser"><Rewind /></IconButton>
              <PanelTitle>BROWSER</PanelTitle>
              <BarSide $gap={2}><IconButton aria-label="Browser options"><Dot /></IconButton><Grip /></BarSide>
            </PanelBar>
            <Tree>
              <TreeItem $root>
                <Expander aria-label="Collapse"><svg width="8" height="7" viewBox="0 0 8 7"><path d="M7 0v6.500H0z" fill="#222" /></svg></Expander>
                <Chip $mark="#f6c571" $gap={8} $width={139}><Bulb /><Component /><ChipText>CoinLauncher Demo v1</ChipText></Chip>
              </TreeItem>
              {nodes.map((n) => (
                <TreeItem key={n.text}>
                  <Expander aria-label="Expand"><Chevron /></Expander>
                  <Chip $mark={n.mark} $gap={n.gap} $width={n.width}>{n.icons}<ChipText>{n.text}</ChipText></Chip>
                </TreeItem>
              ))}
              <TreeItem>
                <Expander aria-label="Expand"><Chevron /></Expander>
                <Chip $mark="#b2dc6c" $on $gap={8} $width={74}><Bulb /><Body /><ChipText>Btm:1</ChipText></Chip>
                <ActiveToggle aria-label="Active component"><svg width="10" height="10" viewBox="0 0 10 10"><circle cx="5" cy="5" r="4.300" fill="#eee" stroke="#555" strokeWidth=".9" /><circle cx="5" cy="5" r="1.800" fill="#333" /></svg></ActiveToggle>
              </TreeItem>
            </Tree>
          </Browser>

          <Dialog onSubmit={(e) => e.preventDefault()}>
            <DialogBar>
              <Grip color="#aaa" />
              <svg width="7" height="7" viewBox="0 0 7 7"><rect width="7" height="7" rx="1.500" fill="#222" /><path d="M1.500 3.500h4" stroke="#aaa" /></svg>
              <DialogTitle>EXTRUDE</DialogTitle>
              <IconButton type="button" aria-label="Dock dialog"><Rewind flip /></IconButton>
            </DialogBar>
            <Fields>
              <Field $tall>
                <label htmlFor="profile">Profile</label>
                <Picked><PickButton id="profile" type="button"><Arrow size={10} />2 selected</PickButton><IconButton type="button" aria-label="Clear profile"><Cross /></IconButton></Picked>
              </Field>
              {choices.map((c) => <ChoiceField key={c.id} {...c} />)}
              <ValueField id="distance" label="Distance" value="0.00 mm" />
              <ValueField id="taper" label="Taper Angle" value="0.0 deg" />
              <Divider />
              <ChoiceField id="operation" label="Operation" value="New Body" icon={<svg width="12" height="12" viewBox="0 0 12 12"><path d="M1 3l2-2h6l2 2v8H1z" fill="#f8f8fa" stroke="#777" /><path d="M7 1l4 3M10.500.5l-3 4" stroke="#e2a03c" strokeWidth="1.300" /></svg>} />
            </Fields>
            <DialogFooter>
              <svg width="10" height="10" viewBox="0 0 10 10" role="img" aria-label="Information"><circle cx="5" cy="5" r="4.600" fill="#111" /><path d="M5 2v1.300M4 4.400h1.200v3M3.800 7.400h2.600" stroke="#fff" strokeWidth="1.200" fill="none" /></svg>
              <Buttons><DialogButton disabled>OK</DialogButton><DialogButton type="button">Cancel</DialogButton></Buttons>
            </DialogFooter>
          </Dialog>
        </Middle>

        <BottomRow>
          <PanelBar>
            <IconButton aria-hidden="true" tabIndex={-1} />
            <PanelTitle>COMMENTS</PanelTitle>
            <BarSide $gap={2}><IconButton aria-label="Show comments"><Dot plus /></IconButton><Grip /></BarSide>
          </PanelBar>
          <NavGroups><NavGroup>{navA}</NavGroup><NavGroup>{navB}</NavGroup></NavGroups>
          <Status>2 Profiles | Angle : 0.0 deg</Status>
        </BottomRow>
      </Workspace>

      <Timeline>
        <Player>
          {playerPaths.map(([label, d]) => <Step key={label} aria-label={label}><svg width="12" height="12" viewBox="0 0 12 12"><path d={d} fill="#4a4a4a" stroke="#4a4a4a" strokeWidth="1" /></svg></Step>)}
        </Player>
        <Features>
          {features.map((f, i) => (
            <Feature key={i}>
              <OwnerBar $fill={f.bar} $short={f.short} />
              <FeatureButton $on={f.on} aria-label={f.label}>{featureIcons[f.kind]}</FeatureButton>
              <Tick $end={i === 0 ? "first" : i === features.length - 1 ? "last" : undefined} />
            </Feature>
          ))}
          <svg width="7" height="24" viewBox="4 0 7 24"><path d="M0 3h8v3l-4 3v14" fill="#666" fillRule="evenodd" /><path d="M4 8v15" stroke="#666" /></svg>
        </Features>
        <TimelineSettings aria-label="Timeline settings"><Gear size={12} /></TimelineSettings>
      </Timeline>
    </Page>
  );
}
